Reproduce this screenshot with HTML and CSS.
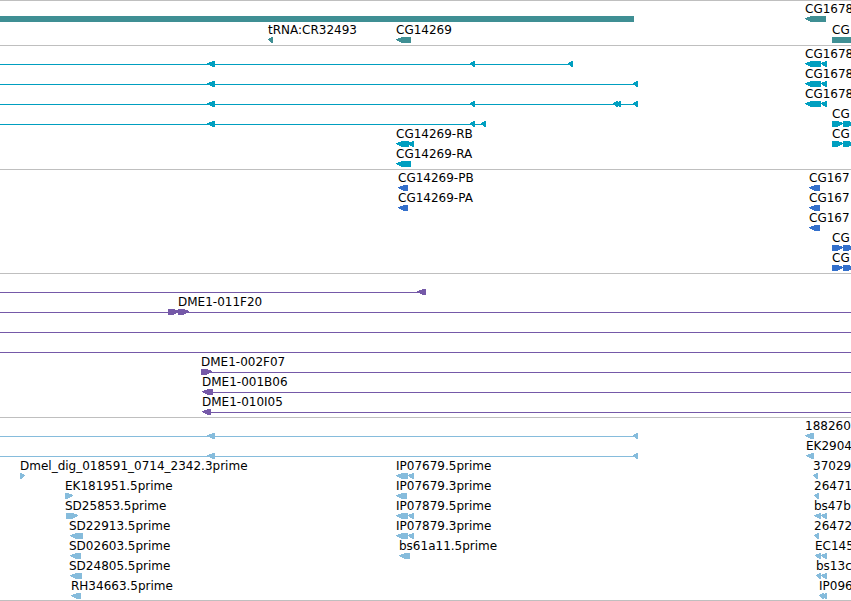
FILE: index.html
```
<!DOCTYPE html>
<html lang="en">
<head>
<meta charset="utf-8">
<title>Genome browser</title>
<link rel="stylesheet" href="styles.css">
</head>
<body>
<main class="browser">
<section class="track genes" aria-label="Genes">
<div class="row"><svg><path d="M0 14h634v6h-634zM805 16l6-2h15v6h-15l-6-3z"/></svg><span class="label" style="left:805px">CG1678</span></div>
<div class="row"><svg><path d="M268 16l4-2h1v6h-1l-4-3zM396 16l6-2h9v6h-9l-6-3zM832 14h60v6h-60z"/></svg><span class="label" style="left:268px">tRNA:CR32493</span><span class="label" style="left:396px">CG14269</span><span class="label" style="left:832px">CG</span></div>
</section>
<section class="track transcripts" aria-label="Transcripts">
<div class="row"><svg><path d="M0 17h570v1h-570zM207 16l6-2h2v6h-2l-6-3zM470 16l4-2h1v6h-1l-4-3zM568 16l4-2h1v6h-1l-4-3zM805 16l6-2h10v6h-10l-6-3zM821 16l5-2h1v6h-1l-5-3z"/></svg><span class="label" style="left:805px">CG1678</span></div>
<div class="row"><svg><path d="M0 17h635v1h-635zM207 16l6-2h2v6h-2l-6-3zM633 16l4-2h1v6h-1l-4-3zM805 16l6-2h10v6h-10l-6-3zM821 16l5-2h1v6h-1l-5-3z"/></svg><span class="label" style="left:805px">CG1678</span></div>
<div class="row"><svg><path d="M0 17h635v1h-635zM207 16l6-2h2v6h-2l-6-3zM470 16l4-2h1v6h-1l-4-3zM613 16l4-2h1v6h-1l-4-3zM616 16l4-2h1v6h-1l-4-3zM633 16l4-2h1v6h-1l-4-3zM805 16l6-2h10v6h-10l-6-3zM821 16l5-2h1v6h-1l-5-3z"/></svg><span class="label" style="left:805px">CG1678</span></div>
<div class="row"><svg><path d="M0 17h483v1h-483zM207 16l6-2h2v6h-2l-6-3zM470 16l4-2h1v6h-1l-4-3zM481 16l4-2h1v6h-1l-4-3zM832 14h5l6 2v1l-6 3h-5zM843 14h5l6 2v1l-6 3h-5z"/></svg><span class="label" style="left:832px">CG</span></div>
<div class="row"><svg><path d="M396 16l6-2h7v6h-7l-6-3zM408 16l5-2h1v6h-1l-5-3zM832 14h5l6 2v1l-6 3h-5zM843 14h5l6 2v1l-6 3h-5z"/></svg><span class="label" style="left:396px">CG14269-RB</span><span class="label" style="left:832px">CG</span></div>
<div class="row"><svg><path d="M396 16l6-2h9v6h-9l-6-3z"/></svg><span class="label" style="left:396px">CG14269-RA</span></div>
</section>
<section class="track proteins" aria-label="Proteins">
<div class="row"><svg><path d="M398 16l6-2h4v6h-4l-6-3zM809 16l6-2h5v6h-5l-6-3z"/></svg><span class="label" style="left:398px">CG14269-PB</span><span class="label" style="left:809px">CG167</span></div>
<div class="row"><svg><path d="M398 16l6-2h4v6h-4l-6-3zM809 16l6-2h5v6h-5l-6-3z"/></svg><span class="label" style="left:398px">CG14269-PA</span><span class="label" style="left:809px">CG167</span></div>
<div class="row"><svg><path d="M809 16l6-2h5v6h-5l-6-3z"/></svg><span class="label" style="left:809px">CG167</span></div>
<div class="row"><svg><path d="M832 14h5l6 2v1l-6 3h-5zM843 14h5l6 2v1l-6 3h-5z"/></svg><span class="label" style="left:832px">CG</span></div>
<div class="row"><svg><path d="M832 14h5l6 2v1l-6 3h-5zM843 14h5l6 2v1l-6 3h-5z"/></svg><span class="label" style="left:832px">CG</span></div>
</section>
<section class="track clones" aria-label="Clones">
<div class="row"><svg><path d="M0 17h420v1h-420zM417 16l6-2h3v6h-3l-6-3z"/></svg></div>
<div class="row"><svg><path d="M0 17h4000v1h-4000zM168 14h5l6 2v1l-6 3h-5zM178 14h5l6 2v1l-6 3h-5z"/></svg><span class="label" style="left:178px">DME1-011F20</span></div>
<div class="row"><svg><path d="M0 17h4000v1h-4000z"/></svg></div>
<div class="row"><svg><path d="M0 17h4000v1h-4000z"/></svg></div>
<div class="row"><svg><path d="M205 17h4000v1h-4000zM201 14h5l6 2v1l-6 3h-5z"/></svg><span class="label" style="left:201px">DME1-002F07</span></div>
<div class="row"><svg><path d="M205 17h4000v1h-4000zM202 16l6-2h5v6h-5l-6-3z"/></svg><span class="label" style="left:202px">DME1-001B06</span></div>
<div class="row"><svg><path d="M205 17h4000v1h-4000zM202 16l6-2h3v6h-3l-6-3z"/></svg><span class="label" style="left:202px">DME1-010I05</span></div>
</section>
<section class="track ests" aria-label="Expressed sequence tags">
<div class="row"><svg><path d="M0 17h635v1h-635zM207 16l6-2h2v6h-2l-6-3zM633 16l4-2h1v6h-1l-4-3zM805 16l6-2h3v6h-3l-6-3z"/></svg><span class="label" style="left:805px">188260</span></div>
<div class="row"><svg><path d="M0 17h635v1h-635zM207 16l6-2h2v6h-2l-6-3zM633 16l4-2h1v6h-1l-4-3zM806 16l6-2h2v6h-2l-6-3z"/></svg><span class="label" style="left:806px">EK2904</span></div>
<div class="row"><svg><path d="M20 14h1l4 2v1l-4 3h-1zM396 16l6-2h6v6h-6l-6-3zM408 16l5-2h1v6h-1l-5-3zM813 16l4-2h1v6h-1l-4-3z"/></svg><span class="label" style="left:20px">Dmel_dig_018591_0714_2342.3prime</span><span class="label" style="left:396px">IP07679.5prime</span><span class="label" style="left:813px">37029</span></div>
<div class="row"><svg><path d="M65 14h2l6 2v1l-6 3h-2zM396 16l6-2h5v6h-5l-6-3zM814 16l4-2h1v6h-1l-4-3z"/></svg><span class="label" style="left:65px">EK181951.5prime</span><span class="label" style="left:396px">IP07679.3prime</span><span class="label" style="left:814px">26471</span></div>
<div class="row"><svg><path d="M66 14h6l6 2v1l-6 3h-6zM396 16l6-2h6v6h-6l-6-3zM408 16l5-2h1v6h-1l-5-3zM814 16l6-2h1v6h-1l-6-3zM821 16l5-2h1v6h-1l-5-3z"/></svg><span class="label" style="left:65px">SD25853.5prime</span><span class="label" style="left:396px">IP07879.5prime</span><span class="label" style="left:814px">bs47b</span></div>
<div class="row"><svg><path d="M70 16l6-2h7v6h-7l-6-3zM396 16l6-2h6v6h-6l-6-3zM408 16l5-2h1v6h-1l-5-3zM814 16l4-2h1v6h-1l-4-3z"/></svg><span class="label" style="left:69px">SD22913.5prime</span><span class="label" style="left:396px">IP07879.3prime</span><span class="label" style="left:814px">26472</span></div>
<div class="row"><svg><path d="M70 16l6-2h5v6h-5l-6-3zM399 16l6-2h5v6h-5l-6-3zM815 16l5-2h1v6h-1l-5-3zM821 16l5-2h1v6h-1l-5-3z"/></svg><span class="label" style="left:69px">SD02603.5prime</span><span class="label" style="left:399px">bs61a11.5prime</span><span class="label" style="left:815px">EC145</span></div>
<div class="row"><svg><path d="M70 16l6-2h6v6h-6l-6-3zM816 16l4-2h1v6h-1l-4-3zM821 16l5-2h1v6h-1l-5-3z"/></svg><span class="label" style="left:69px">SD24805.5prime</span><span class="label" style="left:816px">bs13c</span></div>
<div class="row"><svg><path d="M71 16l6-2h4v6h-4l-6-3zM819 16l4-2h1v6h-1l-4-3zM822 16l4-2h1v6h-1l-4-3z"/></svg><span class="label" style="left:71px">RH34663.5prime</span><span class="label" style="left:819px">IP096</span></div>
</section>
</main>
</body>
</html>
```
FILE: styles.css
```
body {
  margin: 0;
  background: #fff;
  color: #000;
  font: 12px/14px "DejaVu Sans", sans-serif;
}

.browser {
  overflow: hidden;
  border-bottom: 1px solid #bfbfbf;
}

.track {
  padding: 1px 0 2px;
  border-top: 1px solid #bfbfbf;
}

.row {
  position: relative;
  height: 20px;
}

.row svg {
  display: block;
  width: 100%;
  height: 20px;
  fill: currentColor;
  shape-rendering: crispEdges;
}

/* Labels sit at the genomic start of the feature they name. */
.label {
  position: absolute;
  top: 0;
  color: #000;
  white-space: nowrap;
}

.genes {
  padding-bottom: 1px;
  color: #3f8f94;
}

.genes .row {
  height: 21px;
}

.transcripts {
  color: #009fc0;
}

.proteins {
  color: #3370cc;
}

.clones {
  color: #7559a8;
}

.ests {
  padding-bottom: 1px;
  color: #86bcdc;
}
```
